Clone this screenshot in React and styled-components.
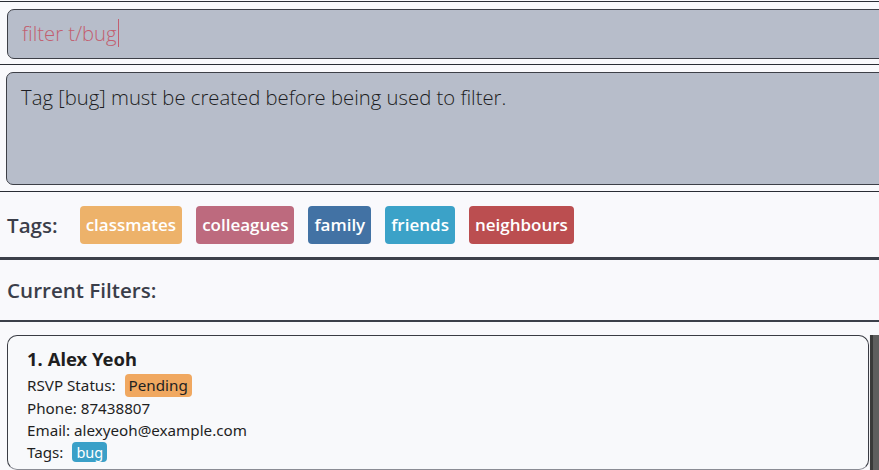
import React from "react";
import styled, { createGlobalStyle } from "styled-components";

const GlobalStyle = createGlobalStyle`
  html, body {
    margin: 0;
    padding: 0;
    background: #f9f9fc;
    overflow: hidden;
  }
  body {
    font-family: "Open Sans", "Noto Sans", sans-serif;
  }
`;

const Page = styled.div`
  width: 879px;
  height: 470px;
  overflow: hidden;
  padding-top: 1px;
  box-sizing: border-box;
`;

const Section = styled.div`
  border-top: ${(p) => p.$top || "0"};
  border-bottom: ${(p) => p.$bottom || "0"};
  padding: ${(p) => p.$pad || "0"};
  box-sizing: border-box;
  height: ${(p) => p.$height || "auto"};
  display: flex;
  align-items: center;
  gap: ${(p) => p.$gap || "0"};
`;

const Field = styled.div`
  width: 900px;
  flex-shrink: 0;
  height: ${(p) => p.$height}px;
  background: #b7bdca;
  border: 1px solid #3d3f47;
  border-radius: 7px;
  box-sizing: border-box;
  padding: ${(p) => p.$pad};
  align-self: flex-start;
  font-weight: 300;
  font-size: 20.3px;
  line-height: 28px;
`;

const CommandText = styled.span`
  color: #c25f70;
  border-right: 1px solid #c25f70;
  padding-right: 1px;
`;

const ResultText = styled.div`
  color: #1d1d22;
`;

const Heading = styled.div`
  font-size: 20.6px;
  font-weight: 600;
  color: #3b3e4a;
  margin-right: ${(p) => p.$after || 0}px;
`;

const TagChip = styled.span`
  background: ${(p) => p.$bg};
  color: #fff;
  font-size: 17px;
  font-weight: 600;
  height: 38px;
  padding: 0 6px;
  border-radius: 4px;
  display: inline-flex;
  align-items: center;
  box-sizing: border-box;
`;

const ListArea = styled.div`
  display: flex;
  padding-top: 13px;
  padding-left: 7px;
`;

const Card = styled.div`
  width: 862px;
  height: 135px;
  flex-shrink: 0;
  background: #f8f9fb;
  border: 1px solid #3a3c44;
  border-bottom-color: #8a8c94;
  border-radius: 10px;
  box-sizing: border-box;
  padding: 7px 19px 0;
  color: #1f1f1f;
  font-family: "Noto Sans", "Open Sans", sans-serif;
`;

const Scrollbar = styled.div`
  width: 10px;
  height: 135px;
  background: #3a3a3a;
  border-left: 1px solid #f0f0f2;
  box-sizing: border-box;
  padding-left: 3px;
  div {
    height: 100%;
    background: #5e5e5e;
  }
`;

const Name = styled.div`
  font-size: 18.4px;
  font-weight: 700;
  height: 30px;
  display: flex;
  align-items: center;
  gap: 5px;
`;

const Line = styled.div`
  font-size: 15.2px;
  height: ${(p) => p.$h || 22}px;
  display: flex;
  align-items: center;
  gap: 9px;
`;

const Badge = styled.span`
  background: ${(p) => p.$bg};
  color: ${(p) => p.$fg};
  border-radius: 4px;
  padding: 0 ${(p) => p.$px || 4}px;
  height: ${(p) => p.$h}px;
  display: inline-flex;
  align-items: center;
  font-size: ${(p) => p.$fs || 15.2}px;
`;

const tags = [
  { name: "classmates", color: "#edb26a" },
  { name: "colleagues", color: "#bd6a7e" },
  { name: "family", color: "#4272a4" },
  { name: "friends", color: "#3ba2c8" },
  { name: "neighbours", color: "#bb4e50" },
];

export default function App() {
  return (
    <Page>
      <GlobalStyle />
      <Section $top="1px solid #2a2d35" $bottom="1px solid #2a2d35" $pad="7px 0 5px 7px">
        <Field $height={50} $pad="9px 14px">
          <CommandText>filter t/bug</CommandText>
        </Field>
      </Section>
      <Section $bottom="1px solid #2a2d35" $pad="7px 0 6px 6px">
        <Field $height={113} $pad="10px 14px">
          <ResultText>Tag [bug] must be created before being used to filter.</ResultText>
        </Field>
      </Section>
      <Section $bottom="3px solid #3c404a" $pad="0 0 0 7px" $height="68px" $gap="14px">
        <Heading $after={8}>Tags:</Heading>
        {tags.map((t) => (
          <TagChip key={t.name} $bg={t.color}>
            {t.name}
          </TagChip>
        ))}
      </Section>
      <Section $bottom="2px solid #3c404a" $pad="0 0 0 7px" $height="62px">
        <Heading>Current Filters:</Heading>
      </Section>
      <ListArea>
        <Card>
          <Name>
            <span>1.</span>
            <span>Alex Yeoh</span>
          </Name>
          <Line $h={24}>
            <span>RSVP Status:</span>
            <Badge $bg="#f0a860" $fg="#222" $h={23}>Pending</Badge>
          </Line>
          <Line>Phone: 87438807</Line>
          <Line>Email: alexyeoh@example.com</Line>
          <Line>
            <span>Tags:</span>
            <Badge $bg="#3aa0c8" $fg="#fff" $h={20} $fs={14.5}>bug</Badge>
          </Line>
        </Card>
        <Scrollbar>
          <div />
        </Scrollbar>
      </ListArea>
    </Page>
  );
}
